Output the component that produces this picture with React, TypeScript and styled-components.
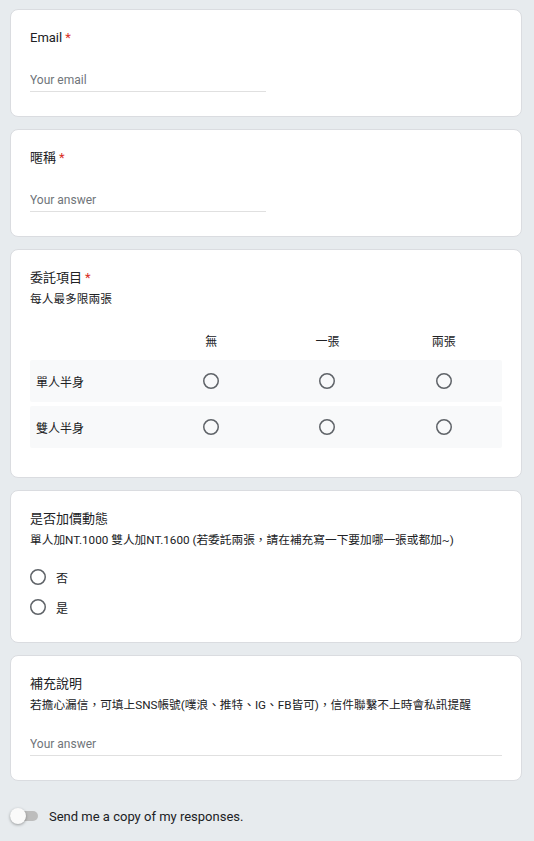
import { FC } from 'react'
import styled, { createGlobalStyle } from 'styled-components'

const GlobalStyle = createGlobalStyle`
  html, body {
    margin: 0;
    padding: 0;
    background: #e7ebee;
  }
  body {
    font-family: Roboto, "Noto Sans CJK TC", "Noto Sans", sans-serif;
    color: #202124;
    -webkit-font-smoothing: antialiased;
  }
`

const Page = styled.div`
  width: 512px;
  padding: 9px 12px 16px 10px;
  display: flex;
  flex-direction: column;
  gap: 12px;
`

const Card = styled.div<{ $pb?: number }>`
  background: #fff;
  border: 1px solid #dadce0;
  border-radius: 8px;
  padding: 18px 19px ${(p) => p.$pb ?? 24}px 19px;
`

const Title = styled.div`
  font-size: 13px;
  line-height: 20px;
  color: #202124;
`

const Required = styled.span`
  color: #d93025;
  margin-left: 3px;
`

const Description = styled.div`
  font-size: 11.7px;
  line-height: 20px;
  margin-top: 1px;
  color: #202124;
`

const AnswerInput = styled.input<{ $full?: boolean; $mt?: number }>`
  display: block;
  box-sizing: border-box;
  width: ${(p) => (p.$full ? '100%' : '50%')};
  margin-top: ${(p) => p.$mt ?? 24}px;
  padding: 0 0 3px 0;
  border: none;
  border-bottom: 1px solid #e0e0e0;
  outline: none;
  background: transparent;
  font-family: Roboto, "Noto Sans CJK TC", sans-serif;
  font-size: 12px;
  line-height: 16px;
  height: 20px;
  color: #202124;
  &::placeholder {
    color: #70757a;
  }
`

const Grid = styled.div`
  margin: 11px 0 5px;
  display: flex;
  flex-direction: column;
  gap: 4px;
`

const GridRow = styled.div<{ $head?: boolean }>`
  display: grid;
  grid-template-columns: 123px repeat(3, 1fr);
  align-items: center;
  height: ${(p) => (p.$head ? 40 : 42)}px;
  margin-bottom: ${(p) => (p.$head ? -4 : 0)}px;
  background: ${(p) => (p.$head ? 'transparent' : '#f8f9fa')};
  border-radius: 2px;
  font-size: 12px;
`

const RowLabel = styled.div`
  padding-left: 6px;
`

const Cell = styled.div`
  display: flex;
  justify-content: center;
  align-items: center;
`

const OptionList = styled.div`
  margin-top: 12px;
`

const Option = styled.label`
  display: flex;
  align-items: center;
  gap: 10px;
  height: 30px;
  font-size: 12px;
  cursor: pointer;
`

const Footer = styled.div`
  display: flex;
  align-items: center;
  height: 24px;
  margin-top: 11px;
  gap: 11px;
`

const Switch = styled.div`
  position: relative;
  width: 28px;
  height: 10px;
  border-radius: 5px;
  background: #bdbdbd;
`

const Thumb = styled.span`
  position: absolute;
  left: 0;
  top: -3px;
  width: 16px;
  height: 16px;
  border-radius: 50%;
  background: #fafafa;
  box-shadow: 0 1px 3px rgba(0, 0, 0, 0.35);
`

const FooterText = styled.span`
  font-size: 13px;
  color: #202124;
`

const Radio: FC = () => (
  <svg width="16" height="16" viewBox="0 0 16 16">
    <circle cx="8" cy="8" r="7.25" fill="none" stroke="#5f6368" strokeWidth="1.5" />
  </svg>
)

const columns = ['無', '一張', '兩張']
const rows = ['單人半身', '雙人半身']

const App: FC = () => (
  <>
    <GlobalStyle />
    <Page>
      <Card>
        <Title>
          Email<Required>*</Required>
        </Title>
        <AnswerInput placeholder="Your email" />
      </Card>

      <Card>
        <Title>
          暱稱<Required>*</Required>
        </Title>
        <AnswerInput placeholder="Your answer" />
      </Card>

      <Card>
        <Title>
          委託項目<Required>*</Required>
        </Title>
        <Description>每人最多限兩張</Description>
        <Grid>
          <GridRow $head>
            <div />
            {columns.map((c) => (
              <Cell key={c}>{c}</Cell>
            ))}
          </GridRow>
          {rows.map((r) => (
            <GridRow key={r}>
              <RowLabel>{r}</RowLabel>
              {columns.map((c) => (
                <Cell key={c}>
                  <Radio />
                </Cell>
              ))}
            </GridRow>
          ))}
        </Grid>
      </Card>

      <Card $pb={20}>
        <Title>是否加價動態</Title>
        <Description>單人加NT.1000 雙人加NT.1600 (若委託兩張，請在補充寫一下要加哪一張或都加~)</Description>
        <OptionList>
          <Option>
            <Radio />
            否
          </Option>
          <Option>
            <Radio />
            是
          </Option>
        </OptionList>
      </Card>

      <Card>
        <Title>補充說明</Title>
        <Description>若擔心漏信，可填上SNS帳號(噗浪、推特、IG、FB皆可)，信件聯繫不上時會私訊提醒</Description>
        <AnswerInput $full $mt={21} placeholder="Your answer" />
      </Card>

      <Footer>
        <Switch>
          <Thumb />
        </Switch>
        <FooterText>Send me a copy of my responses.</FooterText>
      </Footer>
    </Page>
  </>
)

export default App
